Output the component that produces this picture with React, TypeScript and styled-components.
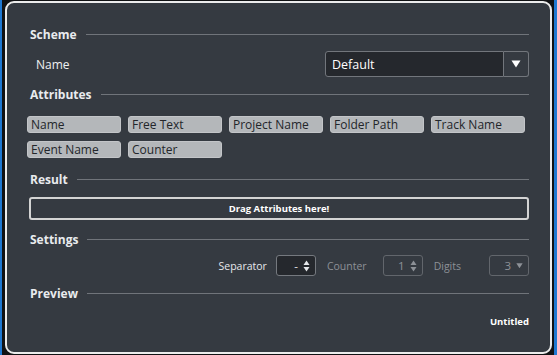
import React, { FC } from 'react';
import styled, { createGlobalStyle } from 'styled-components';

const GlobalStyle = createGlobalStyle`
  html, body {
    margin: 0;
    padding: 0;
    background: #111214;
  }
  body {
    font-family: 'Open Sans', 'Noto Sans', sans-serif;
  }
`;

const Screen = styled.div`
  width: 557px;
  height: 355px;
  box-sizing: border-box;
  border-left: 2px solid #1f78d1;
  border-right: 3px solid #1f78d1;
  padding: 1px 2px 1px 3px;
  display: flex;
`;

const Panel = styled.div`
  flex: 1;
  box-sizing: border-box;
  border: 2px solid #ececec;
  border-radius: 9px;
  background: #353a41;
  padding: 21px 21px 0 23px;
  display: flex;
  flex-direction: column;
`;

const Header = styled.div<{ $top?: number }>`
  display: flex;
  align-items: center;
  height: 20px;
  margin-top: ${(p) => p.$top ?? 0}px;
  color: #e9ebee;
  font-size: 12px;
  font-weight: 700;

  &::after {
    content: '';
    flex: 1;
    height: 1px;
    background: #70747a;
    margin-left: 9px;
  }
`;

const NameRow = styled.div`
  display: flex;
  align-items: center;
  justify-content: space-between;
  height: 26px;
  margin-top: 7px;
  padding-left: 6px;
  color: #eef0f2;
  font-size: 12px;
`;

const Select = styled.div`
  display: flex;
  height: 26px;
`;

const SelectField = styled.div`
  width: 179px;
  box-sizing: border-box;
  border: 1px solid #72767c;
  border-radius: 3px 0 0 3px;
  background: #25282d;
  color: #ffffff;
  display: flex;
  align-items: center;
  padding-left: 6px;
  font-size: 12.5px;
`;

const SelectButton = styled.div`
  width: 25px;
  box-sizing: border-box;
  border: 1px solid #72767c;
  border-left: none;
  border-radius: 0 3px 3px 0;
  display: flex;
  align-items: center;
  justify-content: center;
`;

const Chips = styled.div`
  display: grid;
  grid-template-columns: repeat(5, 94px);
  column-gap: 7px;
  row-gap: 8px;
  margin: 12px 0 0 -3px;
`;

const Chip = styled.div`
  height: 17px;
  box-sizing: border-box;
  background: #b4b7ba;
  border: 1px solid #c3c5c8;
  border-radius: 3px;
  color: #23262a;
  font-size: 12px;
  line-height: 15px;
  padding-left: 3px;
  white-space: nowrap;
  overflow: hidden;
`;

const DropZone = styled.div`
  height: 23px;
  margin: 8px 0 0 -1px;
  box-sizing: border-box;
  border: 2px solid #d4d4d4;
  border-radius: 3px;
  display: flex;
  align-items: center;
  justify-content: center;
  color: #ffffff;
  font-size: 9.5px;
  font-weight: 700;
`;

const SettingsRow = styled.div`
  display: flex;
  align-items: center;
  justify-content: flex-end;
  height: 21px;
  margin-top: 6px;
  font-size: 10.5px;
`;

const Label = styled.span<{ $dim?: boolean; $gap: number }>`
  color: ${(p) => (p.$dim ? '#8d9197' : '#e6e8eb')};
  margin-right: ${(p) => p.$gap}px;
`;

const Spin = styled.div<{ $disabled?: boolean; $gap?: number }>`
  width: 40px;
  height: 21px;
  box-sizing: border-box;
  border: 1px solid ${(p) => (p.$disabled ? '#62666c' : '#75797f')};
  border-radius: 3px;
  background: ${(p) => (p.$disabled ? 'transparent' : '#25282d')};
  color: ${(p) => (p.$disabled ? '#8d9197' : '#e6e8eb')};
  display: flex;
  align-items: center;
  justify-content: flex-end;
  gap: 5px;
  padding-right: 5px;
  margin-right: ${(p) => p.$gap ?? 0}px;
  font-size: 11.5px;
`;

const Preview = styled.div`
  margin-top: 12px;
  text-align: right;
  color: #ffffff;
  font-size: 9.5px;
  font-weight: 700;
`;

const Arrows: FC<{ color: string }> = ({ color }) => (
  <svg width="7" height="12" viewBox="0 0 7 12">
    <path d="M3.5 0.5 L6.5 5 L0.5 5 Z" fill={color} />
    <path d="M0.5 7 L6.5 7 L3.5 11.5 Z" fill={color} />
  </svg>
);

const Down: FC<{ color: string; size: number }> = ({ color, size }) => (
  <svg width={size} height={size * 0.8} viewBox="0 0 10 8">
    <path d="M0.5 0.5 L9.5 0.5 L5 7.5 Z" fill={color} />
  </svg>
);

const attributes = ['Name', 'Free Text', 'Project Name', 'Folder Path', 'Track Name', 'Event Name', 'Counter'];

const App: FC = () => (
  <>
    <GlobalStyle />
    <Screen>
      <Panel>
        <Header>Scheme</Header>
        <NameRow>
          <span>Name</span>
          <Select>
            <SelectField>Default</SelectField>
            <SelectButton>
              <Down color="#ffffff" size={10} />
            </SelectButton>
          </Select>
        </NameRow>

        <Header $top={7}>Attributes</Header>
        <Chips>
          {attributes.map((a) => (
            <Chip key={a}>{a}</Chip>
          ))}
        </Chips>

        <Header $top={11}>Result</Header>
        <DropZone>Drag Attributes here!</DropZone>

        <Header $top={9}>Settings</Header>
        <SettingsRow>
          <Label $gap={9}>Separator</Label>
          <Spin $gap={11}>
            <span>-</span>
            <Arrows color="#e6e8eb" />
          </Spin>
          <Label $dim $gap={16}>Counter</Label>
          <Spin $disabled $gap={11}>
            <span>1</span>
            <Arrows color="#8d9197" />
          </Spin>
          <Label $dim $gap={28}>Digits</Label>
          <Spin $disabled>
            <span>3</span>
            <Down color="#8d9197" size={7} />
          </Spin>
        </SettingsRow>

        <Header $top={7}>Preview</Header>
        <Preview>Untitled</Preview>
      </Panel>
    </Screen>
  </>
);

export default App;
